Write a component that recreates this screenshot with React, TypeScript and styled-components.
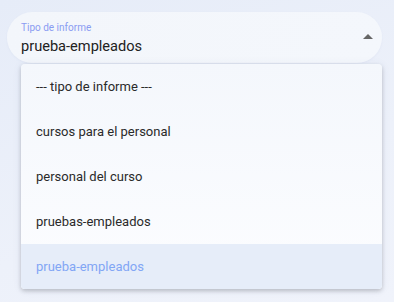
import React from "react";
import styled, { createGlobalStyle } from "styled-components";

const Global = createGlobalStyle`
  html, body { margin: 0; padding: 0; }
  body {
    width: 394px; height: 302px; overflow: hidden;
    background: linear-gradient(160deg, #e6ecf8 0%, #edf1fa 60%, #f0f3fb 100%);
    font-family: Roboto, "Noto Sans", sans-serif;
  }
`;

const Page = styled.div`
  padding: 12px 12px 0 7px;
  display: flex;
  flex-direction: column;
`;

const Field = styled.div`
  height: 51px;
  border-radius: 26px;
  background: linear-gradient(120deg, #f3f6fb 0%, #f4f7fc 100%);
  display: flex;
  align-items: center;
  padding: 0 9px 0 14px;
  box-shadow: 0 1px 2px rgba(180, 190, 215, 0.15);
`;

const FieldText = styled.div`
  flex: 1;
  display: flex;
  flex-direction: column;
  padding-top: 4px;
`;

const Label = styled.div`
  font-size: 10px;
  line-height: 12px;
  color: #8a9cf2;
`;

const Value = styled.div`
  font-size: 14.6px;
  line-height: 22px;
  color: #222;
  margin-top: 1px;
`;

const Arrow = styled.div`
  width: 0;
  height: 0;
  border-left: 5px solid transparent;
  border-right: 5px solid transparent;
  border-bottom: 5px solid #666;
  margin-top: -3px;
`;

const Menu = styled.div`
  margin-left: 14px;
  margin-top: 1px;
  border-radius: 4px;
  background: linear-gradient(180deg, #f4f7fc 0%, #fcfdff 100%);
  box-shadow: 0 2px 4px rgba(0, 0, 0, 0.2), 0 1px 10px rgba(60, 80, 130, 0.08);
  overflow: hidden;
  display: flex;
  flex-direction: column;
`;

const Item = styled.div<{ $selected?: boolean }>`
  height: 45px;
  display: flex;
  align-items: center;
  padding: 0 15px;
  font-size: 13px;
  color: ${(p) => (p.$selected ? "#82a6f5" : "#2a2a2a")};
  background: ${(p) => (p.$selected ? "#e6edf9" : "transparent")};
`;

const options = [
  "--- tipo de informe ---",
  "cursos para el personal",
  "personal del curso",
  "pruebas-empleados",
  "prueba-empleados",
];

export default function App() {
  return (
    <>
      <Global />
      <Page>
        <Field>
          <FieldText>
            <Label>Tipo de informe</Label>
            <Value>prueba-empleados</Value>
          </FieldText>
          <Arrow />
        </Field>
        <Menu>
          {options.map((o, i) => (
            <Item key={o} $selected={i === 4}>
              {o}
            </Item>
          ))}
        </Menu>
      </Page>
    </>
  );
}
